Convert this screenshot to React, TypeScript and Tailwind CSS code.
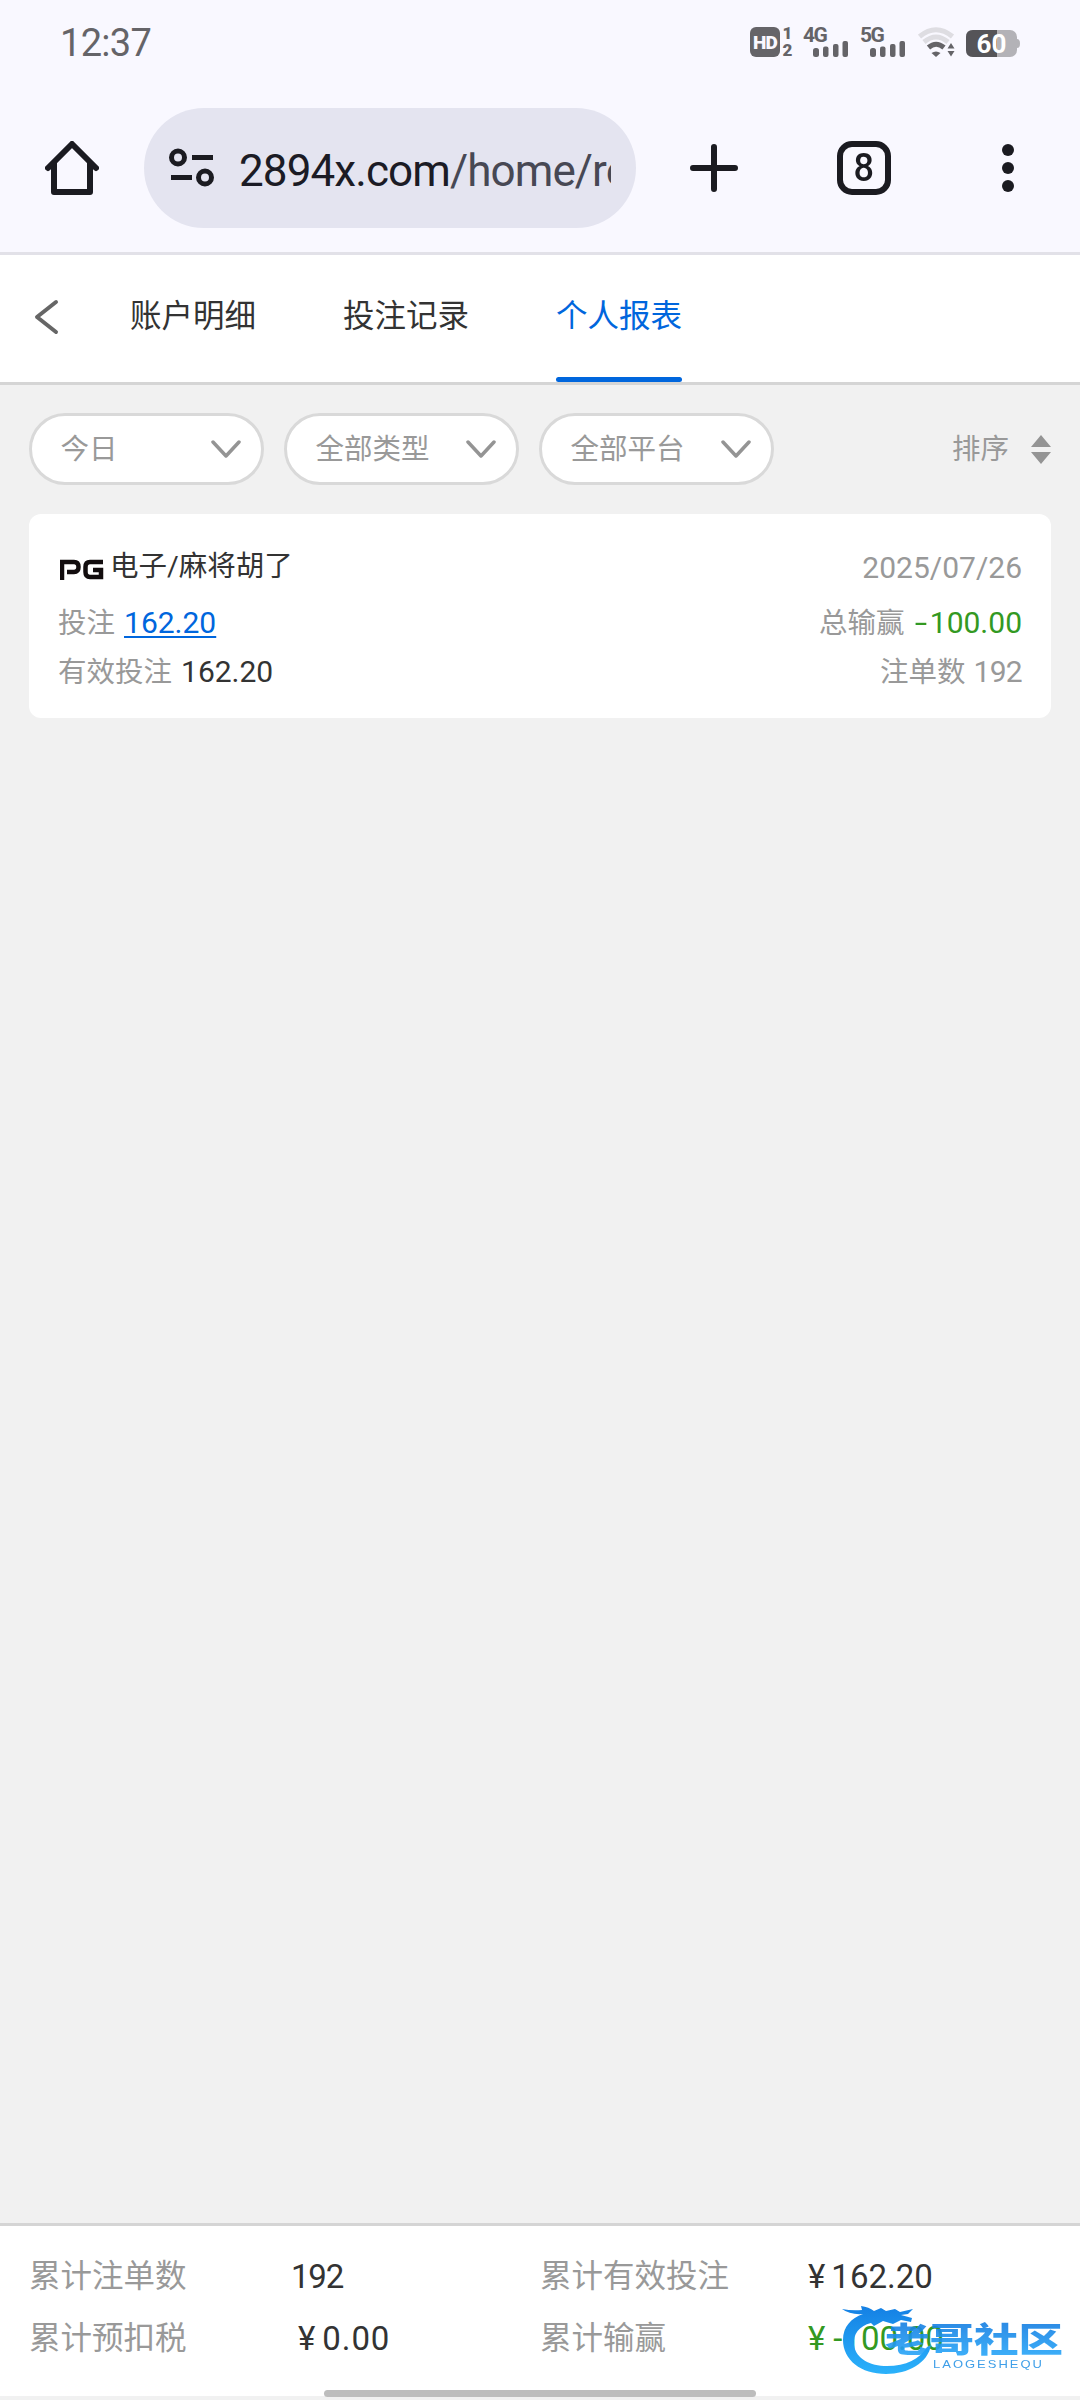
import React from "react";

function Bars() {
  return (
    <g fill="#656468">
      <rect x="0" y="21" width="6" height="9" rx="2.5" />
      <rect x="10" y="19.500" width="5.500" height="10.500" rx="2" />
      <rect x="20" y="17" width="5.500" height="13" rx="2" />
      <rect x="29.500" y="14" width="5.500" height="16" rx="2" />
    </g>
  );
}

function Signal({ label }: { label: string }) {
  return (
    <div className="relative h-[30px] w-[45px]">
      <span className="absolute -left-px top-0 text-[21px] font-bold leading-[16px] tracking-[-1.500px] text-[#656468]">{label}</span>
      <svg className="absolute left-[9px] top-0" width="36" height="30"><Bars /></svg>
    </div>
  );
}

function StatusBar() {
  return (
    <div className="flex h-[84px] items-center px-[60px] text-[#656468]">
      <span className="mt-px text-[38px] leading-[40px] tracking-[-0.700px]">12:37</span>
      <div className="ml-auto flex items-center">
        <div className="flex h-[30px] w-[30px] items-center justify-center rounded-[6px] bg-[#656468] text-[#f9f8ff]">
          <span className="text-[19px] font-black leading-none tracking-[-0.800px]">HD</span>
        </div>
        <div className="ml-[2px] mr-[11px] flex h-[30px] w-[11px] flex-col items-center justify-between text-[17px] font-black leading-[13px]">
          <span>1</span><span>2</span>
        </div>
        <Signal label="4G" />
        <div className="w-[12px]" />
        <Signal label="5G" />
        <svg className="ml-[12px]" width="38" height="30" viewBox="0 0 38 30" fill="none">
          <path d="M1.500 9.500Q18 -4 34.500 9.500" stroke="#dedde2" strokeWidth="5" />
          <path d="M6 15Q18 5 30 15" stroke="#dedde2" strokeWidth="5" />
          <path d="M10.500 20.500Q18 14 26 20.500" stroke="#656468" strokeWidth="5" />
          <path d="M13.500 26Q18 23 22.500 26L18 30Z" fill="#656468" />
          <path d="M29.500 21.500 33 16l3.500 5.500ZM29.500 24 33 29.500l3.500-5.500Z" fill="#656468" />
        </svg>
        <div className="relative ml-[10px] mt-[3px] h-[27px] w-[54px]">
          <svg width="54" height="27">
            <rect x="0" y="0" width="51" height="27" rx="7" fill="#b3b2b7" />
            <path d="M7 0H31V27H7Q0 27 0 20V7Q0 0 7 0Z" fill="#555458" />
            <path d="M51 9q3 0 3 4.500t-3 4.500Z" fill="#b3b2b7" />
          </svg>
          <span className="absolute inset-y-0 left-0 w-[51px] text-center text-[26px] font-bold leading-[28px] text-white">60</span>
        </div>
      </div>
    </div>
  );
}

function BrowserBar() {
  return (
    <div className="flex h-[168px] pl-[45px] pt-[24px]">
      <svg className="mt-[33px]" width="54" height="54" viewBox="0 0 54 54" fill="none" stroke="#1b1b21" strokeWidth="6" strokeLinecap="round" strokeLinejoin="round">
        <path d="M3 27 27 3 51 27M9 22V51H45V22" />
      </svg>
      <div className="ml-[45px] flex h-[120px] w-[492px] items-center rounded-full bg-[#e4e4f0] pl-[25px]">
        <svg width="46" height="40" viewBox="0 0 46 40" fill="none" stroke="#1b1b21" strokeWidth="5">
          <circle cx="9" cy="9.500" r="6.500" />
          <path d="M23 9.500H44M2 29.500H23" />
          <circle cx="36" cy="29.500" r="6.500" />
        </svg>
        <div className="ml-[24px] mt-[6px] w-[372px] overflow-hidden whitespace-nowrap text-[44px] leading-[56px] tracking-[-0.900px] text-[#474854]">
          <span className="text-[#1b1b25]">2894x.com</span>/home/report
        </div>
      </div>
      <svg className="ml-[54px] mt-[36px]" width="48" height="48" viewBox="0 0 48 48" stroke="#1b1b21" strokeWidth="6" strokeLinecap="round">
        <path d="M24 3V45M3 24H45" />
      </svg>
      <div className="ml-[99px] mt-[33px] flex h-[54px] w-[54px] items-center justify-center rounded-[15px] border-[6px] border-[#1b1b21] text-[#1b1b21]">
        <span className="scale-x-[0.950] text-[38px] font-medium leading-none">8</span>
      </div>
      <svg className="ml-[111px] mt-[36px]" width="12" height="48" fill="#1b1b21">
        <circle cx="6" cy="6" r="6" /><circle cx="6" cy="24" r="6" /><circle cx="6" cy="42" r="6" />
      </svg>
    </div>
  );
}

function Filter({ label }: { label: string }) {
  return (
    <div className="flex h-[72px] w-[235px] items-center justify-between rounded-full border-[3px] border-[#d9d9d9] bg-white pl-[28.500px] pr-[20px]">
      <span className="mt-[2px]">{label}</span>
      <svg width="30" height="18" fill="none" stroke="#949494" strokeWidth="3.500" strokeLinecap="round" strokeLinejoin="round"><path d="M2 2 15 16 28 2" /></svg>
    </div>
  );
}

function Watermark() {
  return (
    <div className="absolute left-[841px] top-[76px] h-[76px] w-[230px]">
      <svg className="absolute left-0 top-0" width="100" height="76" viewBox="0 0 100 76">
        <defs>
          <linearGradient id="wave" x1="0" y1="0" x2="0" y2="1">
            <stop offset="0" stopColor="#1480e4" /><stop offset="1" stopColor="#2bb2fb" />
          </linearGradient>
        </defs>
        <path fill="url(#wave)" d="M1 7Q11 9 21 8L20 4Q28 5 33 9L40 6 45 9 54 7 59 10 72 7 67 12 60 13 71 16 70 20 60 18 52 22 42 19 33 24 30 21C18 24 12 32 13 43C15 57 29 64 46 64C65 64 79 57 86 45L90 43C87 61 67 72 45 72C20 72 2 58 2 38C2 25 10 16 22 12Q9 13 1 7Z" />
      </svg>
      <div className="absolute left-[44px] top-[20px] origin-left scale-x-[1.310] whitespace-nowrap bg-gradient-to-b from-[#167ee2] to-[#2aa9fa] bg-clip-text text-[34px] font-black leading-[36px] text-transparent opacity-90">老哥社区</div>
      <div className="absolute left-[92px] top-[56px] origin-left scale-x-[1.180] whitespace-nowrap font-['Liberation_Sans'] text-[11px] leading-[12px] tracking-[1.700px] text-[#3f9fe8]">LAOGESHEQU</div>
    </div>
  );
}

export default function App() {
  const tabs = ["账户明细", "投注记录", "个人报表"];
  return (
    <div className="flex h-[2400px] w-[1080px] flex-col overflow-hidden bg-[#f1f1f1] font-['Roboto','Noto_Sans_CJK_SC',sans-serif]">
      <header className="h-[255px] shrink-0 border-b-[3px] border-[#e2e1e8] bg-[#f9f8ff]">
        <StatusBar />
        <BrowserBar />
      </header>
      <nav className="flex h-[130px] shrink-0 border-b-[3px] border-[#d5d5d5] bg-white pl-[34px]">
        <svg className="mt-[44px]" width="25" height="36" fill="none" stroke="#666" strokeWidth="4" strokeLinecap="round" strokeLinejoin="round"><path d="M22 3 3 18 22 33" /></svg>
        <div className="ml-[71px] flex gap-[87px]">
          {tabs.map((t, i) => (
            <div key={t} className={`relative h-[127px] w-[126px] whitespace-nowrap text-[31.500px] leading-[123px] ${i === 2 ? "text-[#0066dd]" : "text-[#333]"}`}>
              {t}
              {i === 2 && <div className="absolute bottom-0 left-0 h-[5px] w-full rounded-full bg-[#0066dd]" />}
            </div>
          ))}
        </div>
      </nav>
      <main className="flex-1 px-[29px] pt-[28px]">
        <div className="flex items-center gap-[20px] text-[28.500px] text-[#999]">
          <Filter label="今日" />
          <Filter label="全部类型" />
          <Filter label="全部平台" />
          <span className="ml-auto mt-[2px]">排序</span>
          <svg className="ml-[2px] mt-[2px]" width="20" height="30" fill="#949494"><path d="M0 12 10 0 20 12ZM0 17H20L10 29Z" /></svg>
        </div>
        <section className="mt-[29px] h-[204px] rounded-[12px] bg-white px-[29px] pt-[29px] text-[28.500px] text-[#999]">
          <div className="flex h-[49px] items-center">
            <svg className="ml-[2px] mr-[6px] mt-[3px]" width="44" height="21" fill="none" stroke="#120d0e" strokeWidth="4.500">
              <path d="M2 21V3H14Q18.500 3 18.500 8Q18.500 13 14 13H7M43 3H30Q25.500 3 25.500 8V13Q25.500 18 30 18H41V11H33" />
            </svg>
            <span className="text-[#333]">电子/麻将胡了</span>
            <span className="ml-auto text-[30px] leading-[44px]">2025/07/26</span>
          </div>
          <div className="mt-[6px] flex h-[49px] items-center justify-between">
            <div className="flex items-baseline gap-[9px]">投注<span className="text-[30px] text-[#0066dd] underline decoration-2 underline-offset-[3px]">162.20</span></div>
            <div className="flex items-baseline">总输赢<span className="ml-[15px] mr-[2px] origin-right scale-x-[1.500] text-[30px] text-[#339922]">-</span><span className="text-[30px] text-[#339922]">100.00</span></div>
          </div>
          <div className="flex h-[49px] items-center justify-between">
            <div className="flex items-baseline gap-[9px]">有效投注<span className="text-[30px] text-[#333]">162.20</span></div>
            <div className="flex items-baseline gap-[8px]">注单数<span className="text-[30px] tracking-[-0.700px]">192</span></div>
          </div>
        </section>
      </main>
      <footer className="relative h-[177px] shrink-0 border-t-[3px] border-[#d5d5d5]">
        <div className="grid h-[170px] grid-cols-[262px_249px_268px_1fr] grid-rows-[62px_62px] bg-white pl-[29px] pt-[20px] text-[33px] leading-[62px] text-[#333]">
          <span className="text-[31.500px] text-[#999]">累计注单数</span><span className="tracking-[-1.200px]">192</span>
          <span className="text-[31.500px] text-[#999]">累计有效投注</span><span className="flex gap-[6px]"><span>¥</span><span>162.20</span></span>
          <span className="text-[31.500px] text-[#999]">累计预扣税</span><span className="flex gap-[7px] pl-[7px]"><span>¥</span><span className="tracking-[0.900px]">0.00</span></span>
          <span className="text-[31.500px] text-[#999]">累计输赢</span><span className="flex gap-[8px] text-[#339922]"><span>¥</span><span>-100.00</span></span>
        </div>
        <Watermark />
        <div className="absolute bottom-[3px] left-[324px] h-[7px] w-[432px] rounded-full bg-[#bdbdbd]" />
      </footer>
    </div>
  );
}
